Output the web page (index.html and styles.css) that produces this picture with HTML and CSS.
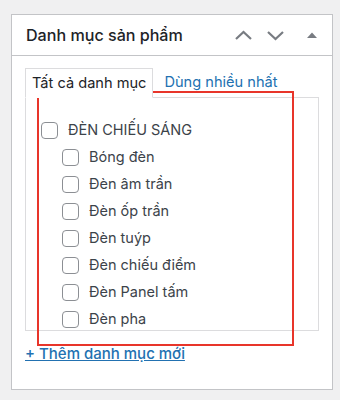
FILE: index.html
```html
<!DOCTYPE html>
<html lang="vi">
<head>
<meta charset="utf-8">
<link rel="stylesheet" href="styles.css">
</head>
<body>
<div class="box">
  <div class="head">
    <h2 class="title">Danh mục sản phẩm</h2>
    <div class="actions">
      <svg class="ic" width="20" height="12" viewBox="0 0 20 12"><path d="M2 10 L9.5 3 L17 10" fill="none" stroke="#787c82" stroke-width="2.2"/></svg>
      <svg class="ic" width="20" height="12" viewBox="0 0 20 12"><path d="M2 3 L9.5 10 L17 3" fill="none" stroke="#787c82" stroke-width="2.2"/></svg>
      <svg class="ic tri" width="12" height="8" viewBox="0 0 12 8"><path d="M1 7 L6 1.5 L11 7 Z" fill="#787c82"/></svg>
    </div>
  </div>
  <div class="inside">
    <ul class="tabs">
      <li class="tab active">Tất cả danh mục</li>
      <li class="tab"><a href="#">Dùng nhiều nhất</a></li>
    </ul>
    <div class="panel">
      <ul class="list">
        <li class="item"><span class="cb"></span>ĐÈN CHIẾU SÁNG
          <ul class="children">
            <li class="item"><span class="cb"></span>Bóng đèn</li>
            <li class="item"><span class="cb"></span>Đèn âm trần</li>
            <li class="item"><span class="cb"></span>Đèn ốp trần</li>
            <li class="item"><span class="cb"></span>Đèn tuýp</li>
            <li class="item"><span class="cb"></span>Đèn chiếu điểm</li>
            <li class="item"><span class="cb"></span>Đèn Panel tấm</li>
            <li class="item"><span class="cb"></span>Đèn pha</li>
          </ul>
        </li>
      </ul>
    </div>
    <a class="add" href="#">+ Thêm danh mục mới</a>
  </div>
</div>
<div class="highlight"></div>
</body>
</html>
```
FILE: styles.css
```css
* { box-sizing: border-box; }
html, body { margin: 0; padding: 0; }
body {
  background: #f0f0f1;
  font-family: Inter, "Noto Sans", sans-serif;
  color: #3c434a;
  width: 340px;
  height: 400px;
  overflow: hidden;
  position: relative;
}
.box {
  margin: 14px 0 0 11px;
  width: 322px;
  height: 376px;
  background: #fff;
  border: 1px solid #c3c4c7;
}
.head {
  height: 41px;
  border-bottom: 1px solid #c3c4c7;
  display: flex;
  align-items: center;
  padding: 0 0 0 14px;
}
.title {
  margin: 0;
  font-size: 16.1px;
  font-weight: 500;
  color: #1d2327;
  flex: 1;
}
.actions {
  display: flex;
  align-items: center;
  padding-right: 14px;
}
.ic { display: block; margin-left: 12px; }
.tri { margin-left: 20px; }
.inside { padding: 12px 13px 0 13px; }
.tabs {
  list-style: none;
  margin: 0;
  padding: 0;
  display: flex;
  align-items: flex-end;
  height: 29px;
}
.tab {
  font-size: 14.6px;
  padding: 0 6px;
  height: 29px;
  line-height: 28px;
  color: #1d2327;
}
.tab.active {
  border: 1px solid #dcdcde;
  border-bottom: 1px solid #fff;
  margin-bottom: -1px;
  height: 30px;
  position: relative;
  z-index: 1;
  background: #fff;
}
.tab a {
  color: #2271b1;
  text-decoration: none;
  margin-left: 5px;
}
.panel {
  border: 1px solid #dcdcde;
  width: 294px;
  height: 234px;
  padding: 18px 0 0 15px;
}
.list, .children { list-style: none; margin: 0; padding: 0; }
.children { padding-left: 21px; }
.item {
  font-size: 14.5px;
  line-height: 27px;
  color: #3c434a;
}
.cb {
  display: inline-block;
  width: 17px;
  height: 17px;
  border: 1px solid #8c8f94;
  border-radius: 4px;
  vertical-align: -4px;
  margin-right: 10px;
  background: #fff;
}
.add {
  display: inline-block;
  margin-top: 13px;
  font-size: 15px;
  font-weight: 500;
  color: #2271b1;
  text-decoration: underline;
}
.highlight {
  position: absolute;
  left: 37px;
  top: 91px;
  width: 257px;
  height: 255px;
  border: 2px solid #e8352a;
  pointer-events: none;
}
```
